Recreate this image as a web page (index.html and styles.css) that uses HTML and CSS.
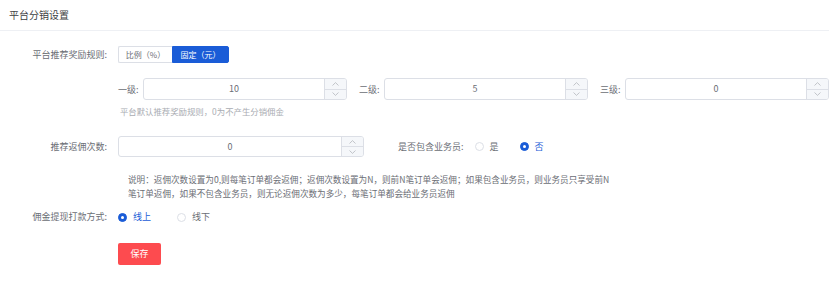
FILE: index.html
```html
<!DOCTYPE html>
<html>
	<head>
		<meta charset="UTF-8">
		<title>平台分销设置</title>
		<link rel="stylesheet" href="styles.css">
	</head>
	<body>
		<div class="page">
			<div class="page-head">平台分销设置</div>
			<div class="form">
				<!-- 奖励规则 -->
				<div class="form-item item-rule">
					<label class="form-label">平台推荐奖励规则:</label>
					<div class="form-con">
						<div class="btn-group">
							<span class="btn">比例（%）</span>
							<span class="btn active">固定（元）</span>
						</div>
					</div>
				</div>
				<!-- 各级佣金 -->
				<div class="form-item item-level">
					<div class="form-label"></div>
					<div class="form-con">
						<div class="levels">
							<div class="level">
								<span class="level-label">一级:</span>
								<div class="num-input">
									<div class="num-val">10</div>
									<div class="num-spin">
										<span class="spin-up"><svg width="7" height="4" viewBox="0 0 7 4"><path d="M0.5 3.5L3.5 0.6L6.5 3.5" fill="none" stroke="#b4b7bd" stroke-width="0.8"/></svg></span>
										<span class="spin-down"><svg width="7" height="4" viewBox="0 0 7 4"><path d="M0.5 0.5L3.5 3.4L6.5 0.5" fill="none" stroke="#b4b7bd" stroke-width="0.8"/></svg></span>
									</div>
								</div>
							</div>
							<div class="level">
								<span class="level-label">二级:</span>
								<div class="num-input">
									<div class="num-val">5</div>
									<div class="num-spin">
										<span class="spin-up"><svg width="7" height="4" viewBox="0 0 7 4"><path d="M0.5 3.5L3.5 0.6L6.5 3.5" fill="none" stroke="#b4b7bd" stroke-width="0.8"/></svg></span>
										<span class="spin-down"><svg width="7" height="4" viewBox="0 0 7 4"><path d="M0.5 0.5L3.5 3.4L6.5 0.5" fill="none" stroke="#b4b7bd" stroke-width="0.8"/></svg></span>
									</div>
								</div>
							</div>
							<div class="level">
								<span class="level-label">三级:</span>
								<div class="num-input">
									<div class="num-val">0</div>
									<div class="num-spin">
										<span class="spin-up"><svg width="7" height="4" viewBox="0 0 7 4"><path d="M0.5 3.5L3.5 0.6L6.5 3.5" fill="none" stroke="#b4b7bd" stroke-width="0.8"/></svg></span>
										<span class="spin-down"><svg width="7" height="4" viewBox="0 0 7 4"><path d="M0.5 0.5L3.5 3.4L6.5 0.5" fill="none" stroke="#b4b7bd" stroke-width="0.8"/></svg></span>
									</div>
								</div>
							</div>
						</div>
						<div class="tip">平台默认推荐奖励规则，0为不产生分销佣金</div>
					</div>
				</div>
				<!-- 返佣次数 -->
				<div class="form-item item-times">
					<label class="form-label">推荐返佣次数:</label>
					<div class="form-con">
						<div class="num-input num-wide">
							<div class="num-val">0</div>
							<div class="num-spin">
								<span class="spin-up"><svg width="7" height="4" viewBox="0 0 7 4"><path d="M0.5 3.5L3.5 0.6L6.5 3.5" fill="none" stroke="#b4b7bd" stroke-width="0.8"/></svg></span>
								<span class="spin-down"><svg width="7" height="4" viewBox="0 0 7 4"><path d="M0.5 0.5L3.5 3.4L6.5 0.5" fill="none" stroke="#b4b7bd" stroke-width="0.8"/></svg></span>
							</div>
						</div>
						<div class="inline-item">
							<span class="inline-label">是否包含业务员:</span>
							<span class="radio"><i class="radio-dot"></i>是</span>
							<span class="radio checked"><i class="radio-dot"></i>否</span>
						</div>
					</div>
				</div>
				<div class="form-item item-desc">
					<div class="form-label"></div>
					<div class="form-con">
						<p class="desc">说明：返佣次数设置为0,则每笔订单都会返佣；返佣次数设置为N，则前N笔订单会返佣；如果包含业务员，则业务员只享受前N<br>笔订单返佣，如果不包含业务员，则无论返佣次数为多少，每笔订单都会给业务员返佣</p>
					</div>
				</div>
				<!-- 打款方式 -->
				<div class="form-item item-pay">
					<label class="form-label">佣金提现打款方式:</label>
					<div class="form-con">
						<span class="radio checked"><i class="radio-dot"></i>线上</span>
						<span class="radio"><i class="radio-dot"></i>线下</span>
					</div>
				</div>
				<div class="form-item item-save">
					<div class="form-label"></div>
					<div class="form-con">
						<span class="btn-save">保存</span>
					</div>
				</div>
			</div>
		</div>
	</body>
</html>
```

FILE: styles.css
```css
*{
	margin:0;
	padding:0;
	box-sizing:border-box;
}
body{
	background:#fff;
	font-family:"Noto Sans CJK SC","Noto Sans",sans-serif;
	font-size:9px;
	color:#6b6e75;
	overflow:hidden;
}
.page-head{
	height:31px;
	line-height:30px;
	padding-left:9px;
	font-size:10px;
	color:#3c3e42;
	border-bottom:1px solid #eef0f4;
}
.form-item{
	display:flex;
}
.form-label{
	width:118px;
	flex:none;
	padding-right:11px;
	text-align:right;
}
.form-con{
	flex:1;
	min-width:0;
}
/* 奖励规则 */
.item-rule{
	margin-top:15px;
	line-height:17px;
}
.btn-group{
	display:flex;
	width:111px;
}
.btn{
	height:17px;
	line-height:15px;
	border:1px solid #dcdfe6;
	font-size:8px;
	color:#6b6e75;
	text-align:center;
	width:54px;
}
.btn:first-child{
	border-radius:2px 0 0 2px;
	border-right:none;
}
.btn.active{
	width:57px;
	background:#1a5cd7;
	border-color:#1a5cd7;
	color:#fff;
	border-radius:0 2px 2px 0;
}
/* 各级 */
.item-level{
	margin-top:15px;
}
.levels{
	display:flex;
	gap:12px;
}
.level{
	display:flex;
	align-items:center;
	flex:none;
}
.level-label{
	width:25px;
}
.num-input{
	display:flex;
	width:204px;
	height:22px;
	border:1px solid #dcdfe6;
	border-radius:3px;
	background:#fff;
	overflow:hidden;
}
.num-val{
	flex:1;
	text-align:center;
	line-height:20px;
	font-size:9px;
	color:#6b6e75;
}
.num-spin{
	width:22px;
	display:flex;
	flex-direction:column;
	border-left:1px solid #dcdfe6;
	background:#f5f7fa;
}
.num-spin span{
	flex:1;
	display:flex;
	align-items:center;
	justify-content:center;
}
.spin-up{
	border-bottom:1px solid #dcdfe6;
}
.tip{
	margin-top:4px;
	padding-left:2px;
	line-height:14px;
	font-size:8.4px;
	color:#a9acb2;
}
/* 返佣次数 */
.item-times{
	margin-top:18px;
	line-height:21px;
}
.item-times .form-con{
	display:flex;
	align-items:center;
}
.num-wide{
	width:246px;
	height:21px;
}
.num-wide .num-val{
	line-height:19px;
}
.inline-item{
	margin-left:34px;
	display:flex;
	align-items:center;
}
.inline-label{
	margin-right:11px;
}
.radio{
	display:inline-flex;
	align-items:center;
	margin-right:21px;
	color:#6b6e75;
	line-height:14px;
}
.radio-dot{
	width:9px;
	height:9px;
	border:1px solid #dcdfe6;
	border-radius:50%;
	margin-right:6px;
	background:#fff;
	position:relative;
}
.radio.checked{
	color:#1a5cd7;
}
.radio.checked .radio-dot{
	background:#1a5cd7;
	border-color:#1a5cd7;
}
.radio.checked .radio-dot::after{
	content:"";
	position:absolute;
	left:2px;
	top:2px;
	width:3px;
	height:3px;
	border-radius:50%;
	background:#fff;
}
.desc{
	margin-top:15px;
	padding-left:10px;
	font-size:8.6px;
	line-height:14px;
	color:#6b6e75;
	white-space:nowrap;
}
/* 打款方式 */
.item-pay{
	margin-top:10px;
	line-height:14px;
}
.item-pay .radio{
	margin-right:24px;
}
.item-save{
	margin-top:17px;
}
.btn-save{
	display:inline-block;
	width:43px;
	height:22px;
	line-height:22px;
	text-align:center;
	background:#fd4b4f;
	color:#fff;
	border-radius:2px;
	font-size:9px;
}
```
